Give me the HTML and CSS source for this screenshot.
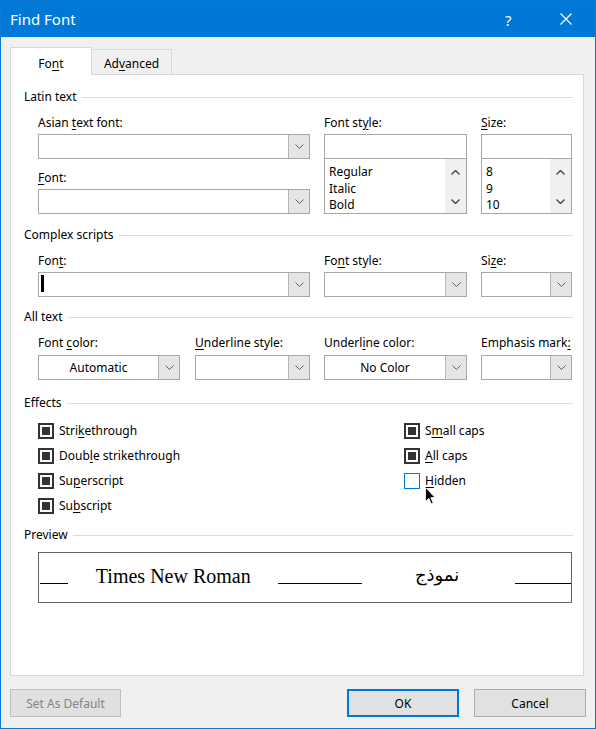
FILE: index.html
```html
<!DOCTYPE html>
<html>
<head>
<meta charset="utf-8">
<link rel="stylesheet" href="styles.css">
</head>
<body>
<div class="window">
  <div class="titlebar">
    <span class="title">Find Font</span>
    <span class="help">?</span>
    <svg class="close" width="12" height="12" viewBox="0 0 12 12"><path d="M0.5 0.5 L11.5 11.5 M11.5 0.5 L0.5 11.5" stroke="#fff" stroke-width="1.1" fill="none"/></svg>
  </div>
  <div class="body">
    <div class="tabs">
      <div class="tab active">Fo<u>n</u>t</div>
      <div class="tab">Ad<u>v</u>anced</div>
    </div>
    <div class="panel">
      <div class="group-head"><span>Latin text</span><i class="rule"></i></div>
      <div class="grid3 latin">
        <div class="col">
          <div class="lbl">Asian <u>t</u>ext font:</div>
          <div class="combo"><div class="field"></div><div class="dd"><svg width="9" height="5" viewBox="0 0 9 5"><polyline points="0.5,0.5 4.5,4.5 8.5,0.5" fill="none" stroke="#606060"/></svg></div></div>
          <div class="lbl second"><u>F</u>ont:</div>
          <div class="combo"><div class="field"></div><div class="dd"><svg width="9" height="5" viewBox="0 0 9 5"><polyline points="0.5,0.5 4.5,4.5 8.5,0.5" fill="none" stroke="#606060"/></svg></div></div>
        </div>
        <div class="col">
          <div class="lbl">Font st<u>y</u>le:</div>
          <div class="textbox"></div>
          <div class="listbox">
            <div class="items"><div>Regular</div><div>Italic</div><div>Bold</div></div>
            <div class="scroll">
              <svg width="9" height="5" viewBox="0 0 9 5"><polyline points="0.5,4.5 4.5,0.5 8.5,4.5" fill="none" stroke="#404040" stroke-width="1.3"/></svg>
              <svg width="9" height="5" viewBox="0 0 9 5"><polyline points="0.5,0.5 4.5,4.5 8.5,0.5" fill="none" stroke="#404040" stroke-width="1.3"/></svg>
            </div>
          </div>
        </div>
        <div class="col">
          <div class="lbl"><u>S</u>ize:</div>
          <div class="textbox"></div>
          <div class="listbox">
            <div class="items"><div>8</div><div>9</div><div>10</div></div>
            <div class="scroll">
              <svg width="9" height="5" viewBox="0 0 9 5"><polyline points="0.5,4.5 4.5,0.5 8.5,4.5" fill="none" stroke="#404040" stroke-width="1.3"/></svg>
              <svg width="9" height="5" viewBox="0 0 9 5"><polyline points="0.5,0.5 4.5,4.5 8.5,0.5" fill="none" stroke="#404040" stroke-width="1.3"/></svg>
            </div>
          </div>
        </div>
      </div>

      <div class="group-head gh2"><span>Complex scripts</span><i class="rule"></i></div>
      <div class="grid3 complex">
        <div class="col">
          <div class="lbl">Fon<u>t</u>:</div>
          <div class="combo"><div class="field"><i class="caret"></i></div><div class="dd"><svg width="9" height="5" viewBox="0 0 9 5"><polyline points="0.5,0.5 4.5,4.5 8.5,0.5" fill="none" stroke="#606060"/></svg></div></div>
        </div>
        <div class="col">
          <div class="lbl">Fo<u>n</u>t style:</div>
          <div class="combo"><div class="field"></div><div class="dd"><svg width="9" height="5" viewBox="0 0 9 5"><polyline points="0.5,0.5 4.5,4.5 8.5,0.5" fill="none" stroke="#606060"/></svg></div></div>
        </div>
        <div class="col">
          <div class="lbl">Si<u>z</u>e:</div>
          <div class="combo"><div class="field"></div><div class="dd"><svg width="9" height="5" viewBox="0 0 9 5"><polyline points="0.5,0.5 4.5,4.5 8.5,0.5" fill="none" stroke="#606060"/></svg></div></div>
        </div>
      </div>

      <div class="group-head gh3"><span>All text</span><i class="rule"></i></div>
      <div class="grid4 alltext">
        <div class="col first">
          <div class="lbl">Font <u>c</u>olor:</div>
          <div class="combo"><div class="field centered">Automatic</div><div class="dd"><svg width="9" height="5" viewBox="0 0 9 5"><polyline points="0.5,0.5 4.5,4.5 8.5,0.5" fill="none" stroke="#606060"/></svg></div></div>
        </div>
        <div class="col">
          <div class="lbl"><u>U</u>nderline style:</div>
          <div class="combo"><div class="field"></div><div class="dd"><svg width="9" height="5" viewBox="0 0 9 5"><polyline points="0.5,0.5 4.5,4.5 8.5,0.5" fill="none" stroke="#606060"/></svg></div></div>
        </div>
        <div class="col">
          <div class="lbl">Underl<u>i</u>ne color:</div>
          <div class="combo"><div class="field centered">No Color</div><div class="dd"><svg width="9" height="5" viewBox="0 0 9 5"><polyline points="0.5,0.5 4.5,4.5 8.5,0.5" fill="none" stroke="#606060"/></svg></div></div>
        </div>
        <div class="col">
          <div class="lbl nowrap">Emphasis mark<u>:</u></div>
          <div class="combo"><div class="field"></div><div class="dd"><svg width="9" height="5" viewBox="0 0 9 5"><polyline points="0.5,0.5 4.5,4.5 8.5,0.5" fill="none" stroke="#606060"/></svg></div></div>
        </div>
      </div>

      <div class="group-head gh4"><span>Effects</span><i class="rule"></i></div>
      <div class="effects">
        <div class="ecol left">
          <div class="chk"><span class="box on"></span><span>Stri<u>k</u>ethrough</span></div>
          <div class="chk"><span class="box on"></span><span>Doub<u>l</u>e strikethrough</span></div>
          <div class="chk"><span class="box on"></span><span>Su<u>p</u>erscript</span></div>
          <div class="chk"><span class="box on"></span><span>Su<u>b</u>script</span></div>
        </div>
        <div class="ecol">
          <div class="chk"><span class="box on"></span><span>S<u>m</u>all caps</span></div>
          <div class="chk"><span class="box on"></span><span><u>A</u>ll caps</span></div>
          <div class="chk"><span class="box focus"></span><span><u>H</u>idden</span></div>
        </div>
      </div>

      <div class="group-head gh5"><span>Preview</span><i class="rule"></i></div>
      <div class="preview">
        <i class="pline l1"></i>
        <span class="ptext">Times New Roman</span>
        <i class="pline l2"></i>
        <span class="parabic" dir="rtl">نموذج</span>
        <i class="pline l3"></i>
      </div>
    </div>
    <div class="buttons">
      <div class="button disabled">Set As Default</div>
      <div class="button default">OK</div>
      <div class="button cancel">Cancel</div>
    </div>
  </div>
  <svg class="pointer" width="11" height="18" viewBox="0 0 11 18"><polygon points="0.5,0.5 0.5,14.5 3.8,11.3 6.3,16.8 8.2,16 5.8,10.6 10,10.6" fill="#000" stroke="#fff" stroke-width="0.8"/></svg>
</div>
</body>
</html>
```

FILE: styles.css
```css
* { box-sizing: border-box; }
html, body { margin: 0; padding: 0; }
body {
  width: 596px;
  height: 729px;
  font-family: "Noto Sans", "Open Sans", sans-serif;
  font-size: 12px;
  color: #000;
  background: #f0f0f0;
}
u { text-decoration: underline; text-underline-offset: 2px; }
.window {
  position: relative;
  width: 596px;
  height: 729px;
  border: 1px solid #0b7ad6;
  background: #f0f0f0;
  display: flex;
  flex-direction: column;
}
.titlebar {
  height: 36px;
  background: #0078d7;
  color: #fff;
  display: flex;
  align-items: center;
  padding-left: 9px;
}
.title { font-size: 15px; }
.help {
  margin-left: auto;
  font-size: 15px;
  width: 8px;
  margin-top: 1px;
}
.close { margin-left: 47px; margin-right: 23px; }
.body {
  flex: 1;
  padding: 10px 9px 0 9px;
  display: flex;
  flex-direction: column;
}
.tabs {
  display: flex;
  align-items: flex-end;
  height: 27px;
}
.tab {
  border: 1px solid #d9d9d9;
  display: flex;
  align-items: center;
  justify-content: center;
}
.tab.active {
  width: 82px;
  height: 28px;
  margin-bottom: -1px;
  background: #fff;
  border-bottom: none;
  position: relative;
  z-index: 2;
  padding-top: 3px;
}
.tab:not(.active) {
  width: 80px;
  height: 25px;
  border-left: none;
  border-bottom: none;
  padding-top: 2px;
}
.panel {
  position: relative;
  z-index: 1;
  width: 574px;
  height: 602px;
  background: #fff;
  border: 1px solid #d9d9d9;
  padding: 14px 10px 0 13px;
}
.group-head {
  height: 16px;
  line-height: 16px;
  display: flex;
  align-items: center;
}
.rule {
  flex: 1;
  height: 1px;
  background: #dcdcdc;
  margin-left: 5px;
  margin-top: 1px;
}
.gh2 { margin-top: 13px; }
.gh3 { margin-top: 12px; }
.gh4 { margin-top: 15px; }
.gh5 { margin-top: 9px; }
.grid3 {
  display: grid;
  grid-template-columns: 272px 143px 91px;
  column-gap: 14px;
  margin-left: 14px;
  margin-top: 10px;
}
.grid4 {
  display: grid;
  grid-template-columns: 143px 115px 143px 91px;
  column-gap: 14px;
  margin-left: 14px;
  margin-top: 10px;
}
.grid4 .col.first { margin-right: 1px; }
.lbl {
  height: 16px;
  line-height: 16px;
  margin-bottom: 3px;
  white-space: nowrap;
}
.alltext .lbl { margin-bottom: 4px; }
.lbl.second { margin-top: 11px; }
.combo {
  height: 25px;
  border: 1px solid #a7a7a7;
  display: flex;
  background: #fff;
}
.combo .field {
  flex: 1;
  position: relative;
  display: flex;
  align-items: center;
}
.combo .field.centered { justify-content: center; }
.combo .dd {
  width: 21px;
  background: #e5e5e5;
  border-left: 1px solid #b5b5b5;
  display: flex;
  align-items: center;
  justify-content: center;
}
.caret {
  position: absolute;
  left: 2px;
  top: 2px;
  width: 3px;
  height: 17px;
  background: #000;
}
.textbox {
  height: 25px;
  border: 1px solid #a7a7a7;
  background: #fff;
}
.listbox {
  height: 55px;
  border: 1px solid #a7a7a7;
  border-top: none;
  display: flex;
}
.listbox .items {
  flex: 1;
  padding: 5px 0 0 4px;
  line-height: 16.5px;
}
.listbox .scroll {
  width: 21px;
  background: #f0f0f0;
  display: flex;
  flex-direction: column;
  align-items: center;
  padding-top: 11px;
  gap: 24px;
}
.effects {
  display: flex;
  margin-left: 14px;
  margin-top: 7px;
}
.ecol.left { width: 366px; }
.chk {
  height: 25px;
  display: flex;
  align-items: center;
}
.box {
  width: 16px;
  height: 16px;
  border: 2px solid #333;
  background: #fff;
  display: flex;
  align-items: center;
  justify-content: center;
  margin-right: 5px;
}
.box.on::after {
  content: "";
  width: 8px;
  height: 8px;
  background: #333;
}
.box.focus {
  border: 1px solid #0078d7;
}
.preview {
  margin-left: 14px;
  margin-top: 9px;
  width: 534px;
  height: 51px;
  border: 1px solid #646464;
  display: flex;
  align-items: flex-start;
}
.pline {
  height: 1px;
  background: #000;
  margin-top: 30px;
}
.l1 { width: 28px; margin-left: 1px; }
.l2 { width: 85px; margin-left: 27px; }
.l3 { width: 56px; margin-left: 56px; }
.ptext {
  font-family: "Liberation Serif", "Times New Roman", serif;
  font-size: 20px;
  line-height: 20px;
  margin-top: 13px;
  margin-left: 28px;
  white-space: nowrap;
}
.parabic {
  font-family: "DejaVu Sans", serif;
  font-size: 18px;
  line-height: 20px;
  margin-top: 12px;
  margin-left: 55px;
  width: 42px;
  text-align: center;
}
.buttons {
  display: flex;
  margin-top: 13px;
  height: 28px;
}
.button {
  height: 28px;
  display: flex;
  align-items: center;
  justify-content: center;
  background: #e1e1e1;
  border: 1px solid #adadad;
}
.button.disabled {
  width: 111px;
  color: #838383;
  border-color: #bfbfbf;
  background: #e0e0e0;
}
.button.default {
  width: 112px;
  margin-left: auto;
  border: 2px solid #0078d7;
}
.button.cancel {
  width: 112px;
  margin-left: 15px;
}
.pointer {
  position: absolute;
  z-index: 10;
  left: 424px;
  top: 486px;
}
```
